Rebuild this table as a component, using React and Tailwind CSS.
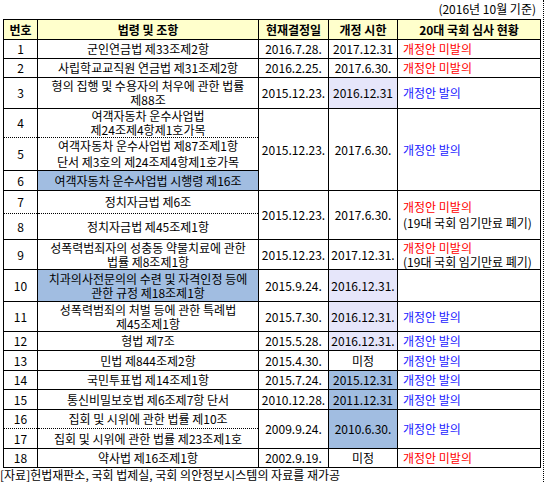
import React from "react";

const F = { fontFamily: '"Noto Sans CJK KR", "Noto Sans", sans-serif' };

const td = "border border-black text-center align-middle p-0 leading-[14px] whitespace-nowrap";
const dotB = " [border-bottom-style:dotted]";
const dotT = " [border-top-style:dotted]";
const R = ({ children }) => <span className="text-[#ff0000]">{children}</span>;
const B = ({ children }) => <span className="text-[#2222ff]">{children}</span>;

export default function App() {
  return (
    <div className="w-[544px] h-[482px] bg-white border-r border-dotted border-black text-[12px] text-black overflow-hidden" style={F}>
      <div className="h-[19px] flex items-start justify-end pr-[7px] pt-[1px] leading-[16px]">(2016년 10월 기준)</div>
      <table className="ml-[3px] border-collapse table-fixed w-[537px]">
        <colgroup>
          <col className="w-[34px]" />
          <col className="w-[221px]" />
          <col className="w-[70px]" />
          <col className="w-[69px]" />
          <col className="w-[143px]" />
        </colgroup>
        <tbody>
          <tr className="h-[20px] bg-[#ffffcc] font-bold">
            <td className={td}>번호</td>
            <td className={td}>법령 및 조항</td>
            <td className={td}>현재결정일</td>
            <td className={td}>개정 시한</td>
            <td className={td}>20대 국회 심사 현황</td>
          </tr>
          <tr className="h-[19px]">
            <td className={td}>1</td>
            <td className={td}>군인연금법 제33조제2항</td>
            <td className={td}>2016.7.28.</td>
            <td className={td}>2017.12.31</td>
            <td className={td + " text-left pl-[5px]"}><R>개정안 미발의</R></td>
          </tr>
          <tr className="h-[19px]">
            <td className={td}>2</td>
            <td className={td}>사립학교교직원 연금법 제31조제2항</td>
            <td className={td}>2016.2.25.</td>
            <td className={td}>2017.6.30.</td>
            <td className={td + " text-left pl-[5px]"}><R>개정안 미발의</R></td>
          </tr>
          <tr className="h-[31px]">
            <td className={td}>3</td>
            <td className={td}>형의 집행 및 수용자의 처우에 관한 법률<br />제88조</td>
            <td className={td}>2015.12.23.</td>
            <td className={td + " bg-[#e6e6fa]"}>2016.12.31</td>
            <td className={td + " text-left pl-[5px]"}><B>개정안 발의</B></td>
          </tr>
          <tr className="h-[29px]">
            <td className={td + dotB}>4</td>
            <td className={td + dotB}>여객자동차 운수사업법<br />제24조제4항제1호가목</td>
            <td className={td} rowSpan={3}>2015.12.23.</td>
            <td className={td} rowSpan={3}>2017.6.30.</td>
            <td className={td + " text-left pl-[5px]"} rowSpan={3}><B>개정안 발의</B></td>
          </tr>
          <tr className="h-[33px]">
            <td className={td + dotT}>5</td>
            <td className={td + dotT + " leading-[16px]"}>여객자동차 운수사업법 제87조제1항<br />단서 제3호의 제24조제4항제1호가목</td>
          </tr>
          <tr className="h-[20px]">
            <td className={td}>6</td>
            <td className={td + " bg-[#a1bde1]"}>여객자동차 운수사업법 시행령 제16조</td>
          </tr>
          <tr className="h-[23px]">
            <td className={td + dotB}>7</td>
            <td className={td + dotB}>정치자금법 제6조</td>
            <td className={td} rowSpan={2}>2015.12.23.</td>
            <td className={td} rowSpan={2}>2017.6.30.</td>
            <td className={td + " text-left pl-[5px] leading-[16px]"} rowSpan={2}><R>개정안 미발의</R><br />(19대 국회 임기만료 폐기)</td>
          </tr>
          <tr className="h-[26px]">
            <td className={td + dotT}>8</td>
            <td className={td + dotT}>정치자금법 제45조제1항</td>
          </tr>
          <tr className="h-[30px]">
            <td className={td}>9</td>
            <td className={td}>성폭력범죄자의 성충동 약물치료에 관한<br />법률 제8조제1항</td>
            <td className={td}>2015.12.23.</td>
            <td className={td}>2017.12.31.</td>
            <td className={td + " text-left pl-[5px]"}><R>개정안 미발의</R><br />(19대 국회 임기만료 폐기)</td>
          </tr>
          <tr className="h-[32px]">
            <td className={td}>10</td>
            <td className={td + " bg-[#a1bde1]"}>치과의사전문의의 수련 및 자격인정 등에<br />관한 규정 제18조제1항</td>
            <td className={td}>2015.9.24.</td>
            <td className={td + " bg-[#e6e6fa]"}>2016.12.31.</td>
            <td className={td}></td>
          </tr>
          <tr className="h-[30px]">
            <td className={td}>11</td>
            <td className={td}>성폭력범죄의 처벌 등에 관한 특례법<br />제45조제1항</td>
            <td className={td}>2015.7.30.</td>
            <td className={td + " bg-[#e6e6fa]"}>2016.12.31.</td>
            <td className={td + " text-left pl-[5px]"}><B>개정안 발의</B></td>
          </tr>
          <tr className="h-[19px]">
            <td className={td}>12</td>
            <td className={td}>형법 제7조</td>
            <td className={td}>2015.5.28.</td>
            <td className={td + " bg-[#e6e6fa]"}>2016.12.31.</td>
            <td className={td + " text-left pl-[5px]"}><B>개정안 발의</B></td>
          </tr>
          <tr className="h-[20px]">
            <td className={td}>13</td>
            <td className={td}>민법 제844조제2항</td>
            <td className={td}>2015.4.30.</td>
            <td className={td}>미정</td>
            <td className={td + " text-left pl-[5px]"}><B>개정안 발의</B></td>
          </tr>
          <tr className="h-[19px]">
            <td className={td}>14</td>
            <td className={td}>국민투표법 제14조제1항</td>
            <td className={td}>2015.7.24.</td>
            <td className={td + " bg-[#a1bde1]"}>2015.12.31</td>
            <td className={td + " text-left pl-[5px]"}><B>개정안 발의</B></td>
          </tr>
          <tr className="h-[20px]">
            <td className={td}>15</td>
            <td className={td}>통신비밀보호법 제6조제7항 단서</td>
            <td className={td}>2010.12.28.</td>
            <td className={td + " bg-[#a1bde1]"}>2011.12.31</td>
            <td className={td + " text-left pl-[5px]"}><B>개정안 발의</B></td>
          </tr>
          <tr className="h-[19px]">
            <td className={td + dotB}>16</td>
            <td className={td + dotB}>집회 및 시위에 관한 법률 제10조</td>
            <td className={td} rowSpan={2}>2009.9.24.</td>
            <td className={td + " bg-[#a1bde1]"} rowSpan={2}>2010.6.30.</td>
            <td className={td + " text-left pl-[5px]"} rowSpan={2}><B>개정안 발의</B></td>
          </tr>
          <tr className="h-[20px]">
            <td className={td + dotT}>17</td>
            <td className={td + dotT}>집회 및 시위에 관한 법률 제23조제1호</td>
          </tr>
          <tr className="h-[19px]">
            <td className={td}>18</td>
            <td className={td}>약사법 제16조제1항</td>
            <td className={td}>2002.9.19.</td>
            <td className={td}>미정</td>
            <td className={td + " text-left pl-[5px]"}><R>개정안 미발의</R></td>
          </tr>
        </tbody>
      </table>
      <div className="leading-[14px] whitespace-nowrap">[자료]헌법재판소, 국회 법제실, 국회 의안정보시스템의 자료를 재가공</div>
    </div>
  );
}
